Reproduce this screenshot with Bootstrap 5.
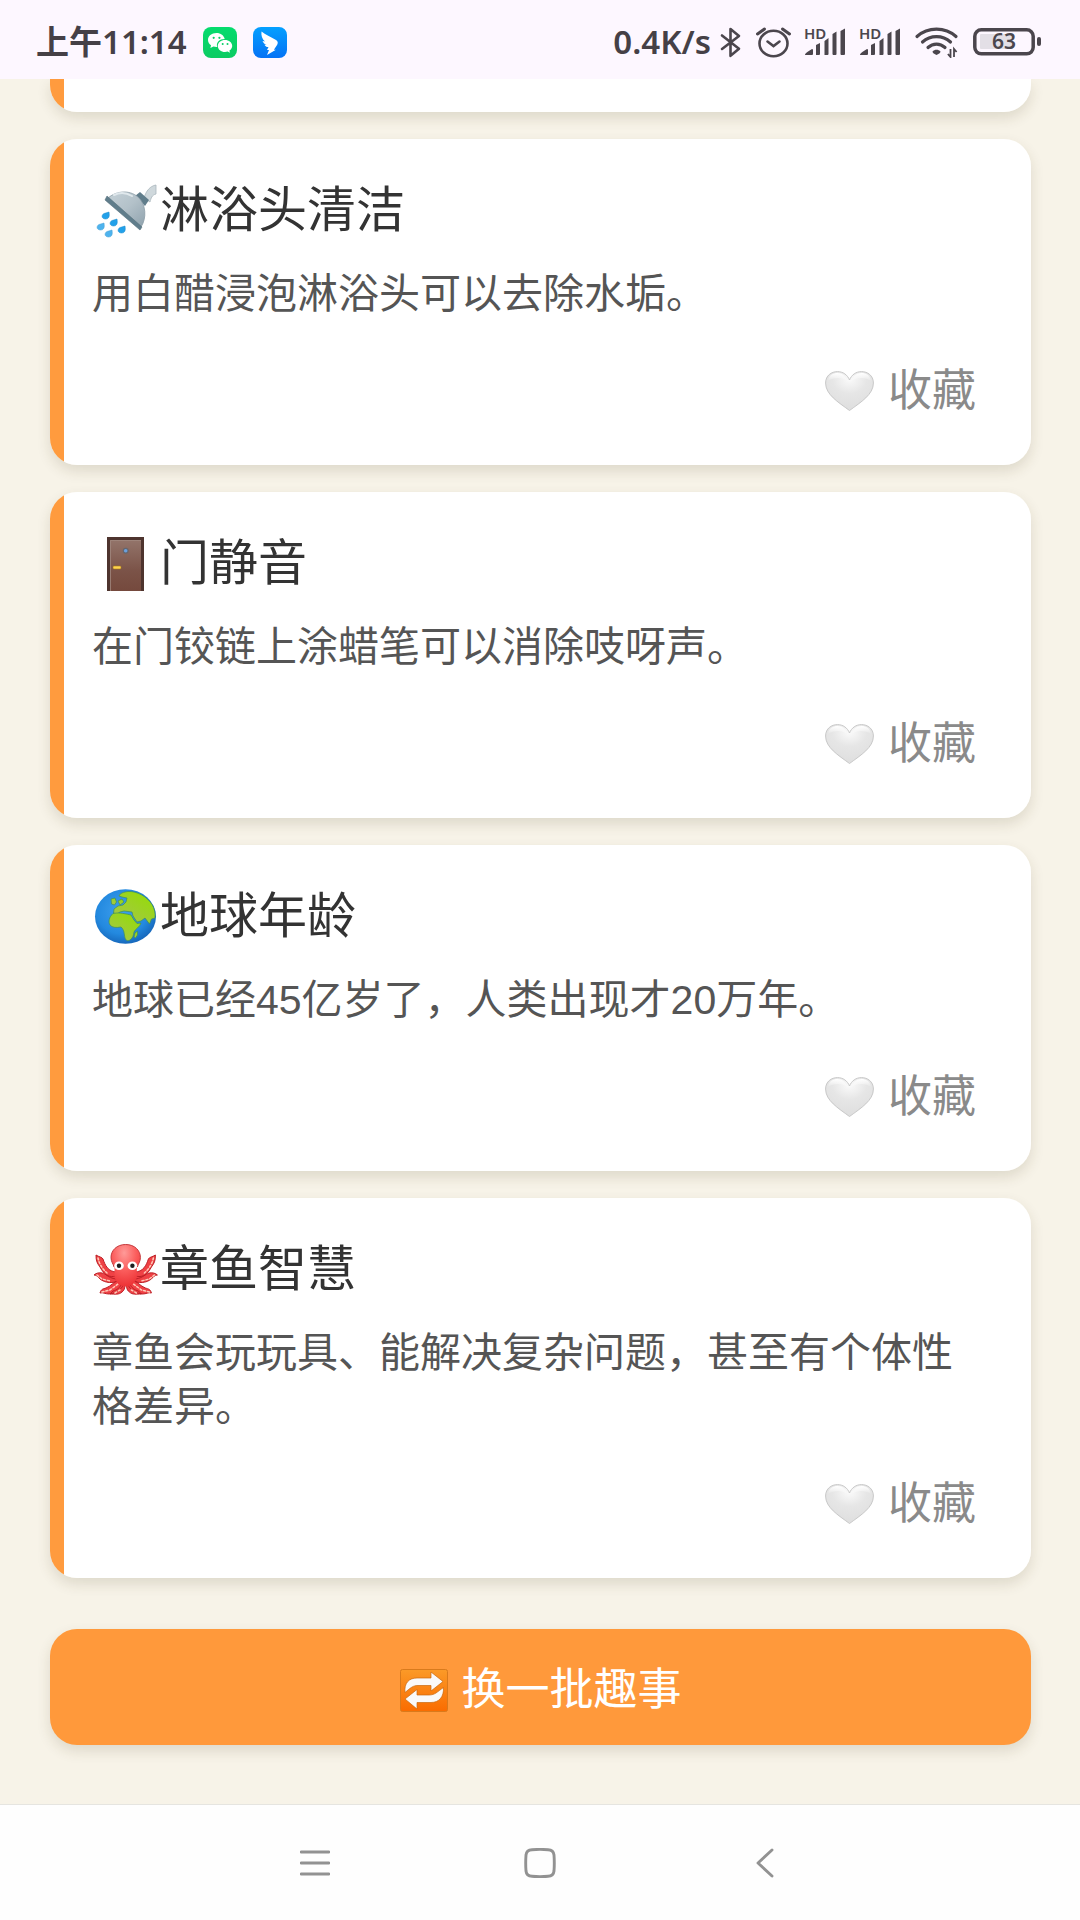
<!DOCTYPE html>
<html lang="zh-CN">
<head>
<meta charset="utf-8">
<meta name="viewport" content="width=device-width, initial-scale=1">
<title>生活趣事</title>
<link href="https://cdn.jsdelivr.net/npm/bootstrap@5.3.0/dist/css/bootstrap.min.css" rel="stylesheet">
<style>
  body { background: #f7f3e8; font-family: "Liberation Sans", "Noto Sans CJK SC", sans-serif; }
  svg { display: block; flex: none; }
  .status-bar { height: 79px; padding: 5px 39px 0 36px; background: #fdf7ff; color: #454046; font: 600 33px/42px "Noto Sans", "Noto Sans CJK SC", sans-serif; position: relative; z-index: 1; }
  .status-left { gap: 16px; }
  .status-right { gap: 13px; }
  .status-right span { margin-right: -4px; }
  .feed { padding: 0 49px 59px 50px; }
  .tip-list { gap: 27px; }
  .tip { background: linear-gradient(to right, #ff9b3e 14px, #fff 14px); border-radius: 27px; box-shadow: 0 6px 14px rgba(70, 60, 20, .14); padding: 40px 55px 44px 42px; }
  .tip-tail { height: 33px; padding: 0; border-top-left-radius: 0; border-top-right-radius: 0; }
  .tip-title { font-size: 49px; line-height: 62px; font-weight: 400; color: #333; margin: 0 0 26px; }
  .tip-text { font-size: 41px; line-height: 54px; color: #555; margin: 0 0 40px; }
  .fav { font-size: 44px; line-height: 60px; color: #8a8a8a; gap: 14px; padding: 0; border: 0; border-radius: 8px; }
  .refresh { background: #ff993b; color: #fff; font-size: 44px; line-height: 60px; gap: 14px; margin-top: 51px; padding: 31px 28px 25px; border: 0; border-radius: 27px; box-shadow: 0 6px 14px rgba(70, 60, 20, .14); }
  .refresh:hover { background: #f58c2b; color: #fff; }
  .sys-nav { background: #fefefe; border-top: 1px solid #e6e5e0; height: 116px; }
  .sys-nav button { width: 225px; }
</style>
</head>
<body class="d-flex flex-column min-vh-100">

<svg width="0" height="0" class="position-absolute" aria-hidden="true">
  <defs>
    <radialGradient id="gHeart" cx=".5" cy=".2" r=".8"><stop offset="0" stop-color="#fafafa"/><stop offset=".45" stop-color="#e6e6e6"/><stop offset="1" stop-color="#dedede"/></radialGradient>
    <linearGradient id="gShine" x2="0" y2="1"><stop offset="0" stop-color="#fff"/><stop offset="1" stop-color="#fff" stop-opacity="0"/></linearGradient>
    <linearGradient id="gDome" x2="1" y2="1"><stop offset="0" stop-color="#c6d2d8"/><stop offset=".5" stop-color="#b3c1c9"/><stop offset="1" stop-color="#8fa2ad"/></linearGradient>
    <linearGradient id="gDoor" x2="0" y2="1"><stop offset="0" stop-color="#93746a"/><stop offset=".6" stop-color="#7b5348"/><stop offset="1" stop-color="#75493d"/></linearGradient>
    <radialGradient id="gSea" cx=".45" cy=".4" r=".6"><stop offset="0" stop-color="#3fa0ee"/><stop offset=".7" stop-color="#2389df"/><stop offset="1" stop-color="#1769bd"/></radialGradient>
    <linearGradient id="gLand" x1="1" y1="0" x2=".2" y2="1"><stop offset="0" stop-color="#93de00"/><stop offset="1" stop-color="#a5c64a"/></linearGradient>
    <radialGradient id="gOcto" cx=".45" cy=".2" r=".8"><stop offset="0" stop-color="#ff9a98"/><stop offset=".5" stop-color="#fb5f5e"/><stop offset="1" stop-color="#ed3336"/></radialGradient>
    <linearGradient id="gRepeat" x2="0" y2="1"><stop offset="0" stop-color="#fb9a28"/><stop offset="1" stop-color="#fa6c00"/></linearGradient>
    <linearGradient id="gWe" x2="0" y2="1"><stop offset="0" stop-color="#05dc6e"/><stop offset="1" stop-color="#0ccb62"/></linearGradient>
    <linearGradient id="gDing" x2="0" y2="1"><stop offset="0" stop-color="#04a0ff"/><stop offset="1" stop-color="#0572f5"/></linearGradient>
    <symbol id="heart" viewBox="0 0 49 40">
      <path d="M24.500 39.500C13 31 .6 23.500.6 12 .6 4.500 6.500.6 12.500.6c5.700 0 10 3.400 12 8.400C26.500 4 30.800.6 36.500.6c6 0 11.900 3.900 11.900 11.400C48.400 23.500 36 31 24.500 39.500z" fill="url(#gHeart)" stroke="#c8c8c8" stroke-width="1"/>
      <path d="M3 10C4 4 8 2 12.500 2c5 0 8.500 3 9.500 8-5-4-13-4-19 0zM27 10c1-5 4.500-8 9.500-8 4.500 0 8.500 2 9.500 8-6-4-14-4-19 0z" fill="url(#gShine)"/>
    </symbol>
    <symbol id="bars" viewBox="0 0 42 30">
      <text x="0" y="12" font-size="15" font-weight="600" font-family="Noto Sans, sans-serif" fill="#4b464d">HD</text>
      <path d="M1 28c0-2 4-4 7-6q1 0 1 1v4q0 1-1 1zM12 18l4-2v11q0 1-1 1h-3zM20.500 14l4-3v16q0 1-1 1h-3zM28.500 7l4-2.500v22.500q0 1-1 1h-2q-1 0-1-1zM36.500 4l4.500-2.500v25.500q0 1-1 1h-2.500q-1 0-1-1z" fill="#4b464d"/>
    </symbol>
  </defs>
</svg>

<header class="status-bar d-flex justify-content-between align-items-center">
  <div class="status-left d-flex align-items-center">
    <span>上午11:14</span>
    <svg width="34" height="31" viewBox="0 0 34 31" role="img" aria-label="微信">
      <rect width="34" height="31" rx="8" fill="url(#gWe)"/>
      <path d="M13.500 6C8.500 6 5 9.200 5 13c0 2.200 1.200 4 3 5.300L7.400 21l3-1.500c1 .3 2 .5 3.200.5h.6C12.800 15.500 16.500 12 21.700 12 21 8.600 17.700 6 13.500 6z" fill="#fff"/>
      <path d="M22 13c-4 0-7.200 2.600-7.200 6s3.200 6 7.200 6c1 0 1.800-.1 2.600-.4l2.300 1.200-.5-2.200c1.700-1.100 2.800-2.700 2.800-4.600 0-3.400-3.200-6-7.200-6z" fill="#fff"/>
      <g fill="#08d067"><circle cx="10.700" cy="10.800" r="1.100"/><circle cx="16.400" cy="10.800" r="1.100"/><circle cx="19.700" cy="17" r="1"/><circle cx="24.500" cy="17" r="1"/></g>
    </svg>
    <svg width="34" height="31" viewBox="0 0 34 31" role="img" aria-label="钉钉">
      <rect width="34" height="31" rx="8" fill="url(#gDing)"/>
      <path d="M8.500 4.500c4 3.200 9 5 14.500 8.600 2 1.400 2.200 2.900 1.200 4.600l-3.300 5h2L14 28l2-5h-2l1.500-3c-2 .2-3.500-1-4-2.300l2 .2c-2-1-3.500-2.500-4-4l2.500.7C9 12 8 8.500 8.500 4.500z" fill="#fff"/>
    </svg>
  </div>
  <div class="status-right d-flex align-items-center">
    <span>0.4K/s</span>
    <svg width="22" height="31" viewBox="0 0 22 31" role="img" aria-label="蓝牙"><path d="M2 8.500l17 13.300-8.500 7V2l8.500 7L2 22" fill="none" stroke="#4b464d" stroke-width="2.600" stroke-linejoin="round" stroke-linecap="round"/></svg>
    <svg width="36" height="31" viewBox="0 0 36 31" role="img" aria-label="闹钟"><g fill="none" stroke="#4b464d" stroke-width="2.600" stroke-linecap="round"><ellipse cx="18.500" cy="16.500" rx="14" ry="12.800"/><path d="M12.500 14.500l6 4.500 6-4.500"/><path d="M2.500 7l7-5M27.500 2l7 5" stroke-width="3"/></g></svg>
    <svg width="42" height="30" role="img" aria-label="信号一"><use href="#bars"/></svg>
    <svg width="42" height="30" role="img" aria-label="信号二"><use href="#bars"/></svg>
    <svg width="46" height="31" viewBox="0 0 46 31" role="img" aria-label="无线网络"><g fill="none" stroke="#4b464d" stroke-width="3.200" stroke-linecap="round"><path d="M3 9.500C14-.3 31-.3 42 9.500M8.500 15c8-7.200 20-7.200 28 0M14 20.500c5-4.500 12-4.500 17 0"/></g><path d="M22.500 28c-3-1.200-4-2.200-4-3.400 2-2.400 6-2.400 8 0 0 1.200-1 2.200-4 3.400z" fill="#4b464d"/><path d="M36.500 22v8l-2.600-3M40 30v-8l2.600 3" fill="none" stroke="#4b464d" stroke-width="1.800"/></svg>
    <svg width="68" height="28" viewBox="0 0 68 28" role="img" aria-label="电量 63"><rect x="1.800" y="1.800" width="58.400" height="24" rx="6.500" fill="none" stroke="#4b464d" stroke-width="3.500"/><path d="M8 6h32v15H8q-1 0-1-1V7q0-1 1-1z" fill="#e3dfe6"/><rect x="64" y="9" width="4" height="9" rx="2" fill="#4b464d"/><text x="31" y="21" text-anchor="middle" font-size="21" font-weight="600" font-family="Noto Sans, sans-serif" fill="#4b464d">63</text></svg>
  </div>
</header>

<main class="feed flex-fill d-flex flex-column">
  <div class="tip-list d-flex flex-column">
    <div class="tip tip-tail"></div>

    <article class="tip">
      <h2 class="tip-title d-flex">
        <svg width="68" height="60" viewBox="0 0 68 60" aria-hidden="true">
          <path d="M52 19C54 12 58 7 64 6v9c-4 1-5 4-6 8z" fill="#cfd8dc" stroke="#a9b6bd" stroke-width=".8"/>
          <path d="M43 17l5-4 9 8-4 6z" fill="#607d8b"/>
          <path d="M14 21C22 12 37 10 46 18c8 7 9 21 3 30z" fill="url(#gDome)" stroke="#8a9ca6" stroke-width=".8"/>
          <path d="M15 17l35 31-2 3L13 21z" fill="#607d8b" stroke="#546e7a" stroke-width=".6"/>
          <path d="M22 16c6-3 13-2 18 1" fill="none" stroke="#e0e8ec" stroke-width="2" stroke-linecap="round"/>
          <g stroke="#1787c9" stroke-width=".5"><path id="drop" d="M17 33c.7 4 .2 7-3.500 7-4 0-4.500-4-1.500-5.500z" fill="#22a1ea"/><use href="#drop" x="8" y="7"/><g opacity=".8"><use href="#drop" x="-5" y="11"/><use href="#drop" x="3" y="18"/></g><use href="#drop" x="16" y="14"/></g>
        </svg>
        <span>淋浴头清洁</span>
      </h2>
      <p class="tip-text">用白醋浸泡淋浴头可以去除水垢。</p>
      <button type="button" class="fav btn d-flex align-items-center ms-auto"><svg width="49" height="40" aria-hidden="true"><use href="#heart"/></svg>收藏</button>
    </article>

    <article class="tip">
      <h2 class="tip-title d-flex">
        <svg width="68" height="60" viewBox="0 0 68 60" aria-hidden="true">
          <path d="M15 5h37v54H15z" fill="#4e342e"/><path d="M18 8h31v51H18z" fill="url(#gDoor)"/><path d="M18.500 59V8.500H49" fill="none" stroke="#a1887f" stroke-width=".8"/>
          <circle cx="33.700" cy="18.700" r="3" fill="#65656d"/><circle cx="33.700" cy="18.700" r="1.800" fill="#6ba0dc"/>
          <rect x="21" y="34" width="8" height="3" rx="1" fill="#ffd54f" stroke="#a97b1a" stroke-width=".6"/>
        </svg>
        <span>门静音</span>
      </h2>
      <p class="tip-text">在门铰链上涂蜡笔可以消除吱呀声。</p>
      <button type="button" class="fav btn d-flex align-items-center ms-auto"><svg width="49" height="40" aria-hidden="true"><use href="#heart"/></svg>收藏</button>
    </article>

    <article class="tip">
      <h2 class="tip-title d-flex">
        <svg width="68" height="60" viewBox="0 0 68 60" aria-hidden="true">
          <ellipse cx="33.500" cy="31.500" rx="30.500" ry="27.300" fill="url(#gSea)"/>
          <g fill="url(#gLand)" stroke="#3f8d5c" stroke-width=".7" stroke-linejoin="round">
            <path d="M27 11c1-3 5-4 9-4.500 9-.5 19 5 24 13 2.500 4 3.500 9 3 13.500l-3.500 1-2 5-4.500-6-4 3-4 1-4-6-1-4-8-1-4 1-3 2-3.500-1 .5-4 4-3 5-1 3-3 1-4-5-1z"/>
            <path d="M19 14l4-1 1.500 4-2 3-3-1zM26 16l4-2 2 3-4 3z"/>
            <path d="M21 28.500c5-1 9-.5 18 1.500l3 5 3 3.500 4-.5c-1 4-6 6-7 9-.5 3-1 6-4 8-2.500 1.500-4 .5-5-2-1-4-.5-8-4-11-5 1-9 .5-11-2-2-3-1-8 3-11.500z"/>
            <path d="M43 48l2.500-2v4l-2 3-1.500-1z"/>
          </g>
        </svg>
        <span>地球年龄</span>
      </h2>
      <p class="tip-text">地球已经45亿岁了，人类出现才20万年。</p>
      <button type="button" class="fav btn d-flex align-items-center ms-auto"><svg width="49" height="40" aria-hidden="true"><use href="#heart"/></svg>收藏</button>
    </article>

    <article class="tip">
      <h2 class="tip-title d-flex">
        <svg width="68" height="60" viewBox="0 0 68 60" aria-hidden="true">
          <g id="arms">
            <path d="M25 34C16 34 13 27 11 21c-1-2-4-2-7-4 0 6 1 8 4 12 3 6 8 11 16 12zM24 38c-7 2-10-2-14-3-3-.5-6 0-8 2 3 0 4 2 6 4 5 4 13 5 20 1zM27 41c-5 3-8 7-13 9-3 1-5 1-6 5 3-1 5 1 9 1 8-1 14-5 15-12zM30 45c-2 5-5 7-9 8l-3 3c5 0 9 1 12-2 3-2 3-6 3-9z" fill="#ef4145" stroke="#bd1f25" stroke-width="1" stroke-linejoin="round"/>
            <path d="M6 20c1 5 4 11 9 15M5 37l5 4 8 2M10 54l8-2 8-6M23 55l5-3" fill="none" stroke="#ffc9b8" stroke-width="1.500" stroke-dasharray="2 2" stroke-linecap="round"/>
          </g>
          <use href="#arms" transform="translate(67.400 0) scale(-1 1)"/>
          <path d="M33.700 6.500c-9 0-14.700 6-14.700 13 0 5 3 7 3.500 11 .4 4-1 7 1 11 2 5 6 7 10.200 7s8.200-2 10.200-7c2-4 .6-7 1-11 .5-4 3.500-6 3.500-11 0-7-5.700-13-14.700-13z" fill="url(#gOcto)"/>
          <path d="M22 29c-.5-3-3-5-3-9.500 0-7 5.700-13 14.700-13s14.700 6 14.700 13c0 4.500-2.500 6.500-3 9.500" fill="none" stroke="#c4393c" stroke-width="1"/>
          <g fill="#fff"><ellipse cx="27" cy="27.700" rx="4.800" ry="4.300"/><ellipse cx="40.400" cy="27.700" rx="4.800" ry="4.300"/></g>
          <g fill="#1e1e1e"><circle cx="27" cy="27.700" r="2.200"/><circle cx="40.400" cy="27.700" r="2.200"/></g>
        </svg>
        <span>章鱼智慧</span>
      </h2>
      <p class="tip-text">章鱼会玩玩具、能解决复杂问题，甚至有个体性格差异。</p>
      <button type="button" class="fav btn d-flex align-items-center ms-auto"><svg width="49" height="40" aria-hidden="true"><use href="#heart"/></svg>收藏</button>
    </article>
  </div>

  <button type="button" class="refresh btn d-flex justify-content-center align-items-center">
    <svg width="48" height="43" viewBox="0 0 48 43" aria-hidden="true">
      <rect x=".5" y=".5" width="47" height="42" rx="2" fill="url(#gRepeat)" stroke="#d97a1c" stroke-width="1"/>
      <g fill="#fafafa" stroke="#c9690e" stroke-width=".7" stroke-linejoin="round">
        <path d="M31 3l12 9.500L31 22v-5.500H18c-5 0-7 2-13 7C4 14 9 9 17 9h14z"/>
        <path d="M17 40L5 30l12-9.500V26h12c6 0 8-3 14.500-7.500C44 28 39 33.500 31 33.500H17z"/>
      </g>
    </svg>
    换一批趣事
  </button>
</main>

<nav class="sys-nav d-flex justify-content-center" aria-label="系统导航">
  <button type="button" class="btn border-0 d-flex justify-content-center align-items-center" aria-label="最近任务"><svg width="30" height="28" viewBox="0 0 30 28"><path d="M1 3h28M1 14h28M1 25h28" stroke="#929292" stroke-width="2.800" stroke-linecap="round"/></svg></button>
  <button type="button" class="btn border-0 d-flex justify-content-center align-items-center" aria-label="主屏幕"><svg width="32" height="30" viewBox="0 0 32 30"><path d="M8 1.700q8-.6 16 0 5.500.3 6 5.300.6 8 0 16-.5 5-6 5.300-8 .6-16 0-5.500-.3-6-5.300-.6-8 0-16 .5-5 6-5.300z" fill="none" stroke="#929292" stroke-width="2.900"/></svg></button>
  <button type="button" class="btn border-0 d-flex justify-content-center align-items-center" aria-label="返回"><svg width="18" height="30" viewBox="0 0 18 30"><path d="M16 2L2 15l14 13" fill="none" stroke="#929292" stroke-width="2.900" stroke-linecap="round" stroke-linejoin="round"/></svg></button>
</nav>

<script src="https://cdn.jsdelivr.net/npm/bootstrap@5.3.0/dist/js/bootstrap.bundle.min.js"></script>
</body>
</html>
